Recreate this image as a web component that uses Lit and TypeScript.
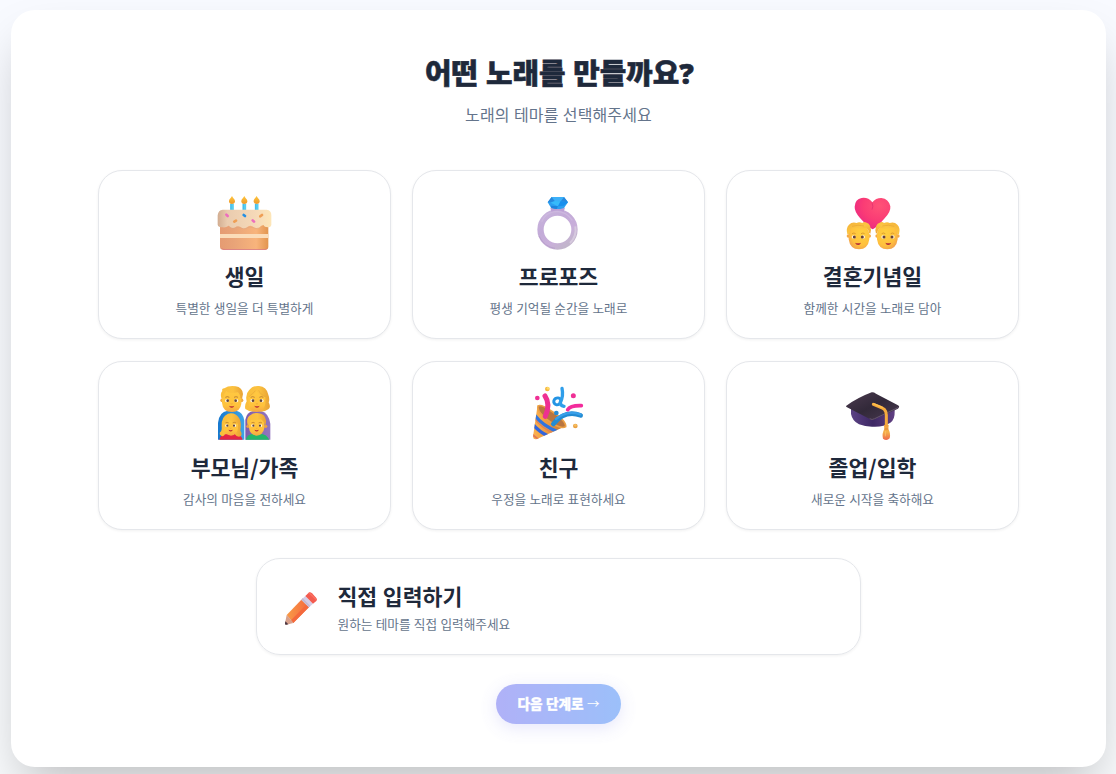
import { LitElement, html, css, svg } from "lit";
import { customElement, property } from "lit/decorators.js";

const cake = svg`
  <defs>
    <linearGradient id="base"><stop offset="0" stop-color="#e59b72"/><stop offset=".3" stop-color="#e9a478"/><stop offset=".75" stop-color="#f8b47c"/><stop offset="1" stop-color="#e2954f"/></linearGradient>
    <linearGradient id="ice"><stop offset="0" stop-color="#d2ad91"/><stop offset=".18" stop-color="#eaccaf"/><stop offset=".7" stop-color="#f5d9b8"/><stop offset="1" stop-color="#fde6b8"/></linearGradient>
    <linearGradient id="flame" x2="0" y2="1"><stop offset="0" stop-color="#ffc83d"/><stop offset="1" stop-color="#ee982c"/></linearGradient>
  </defs>
  <path d="M47 115H192V182Q192 191 183 191H56Q47 191 47 182Z" fill="url(#base)"/>
  <path d="M50 187Q53 191 58 191H183Q188 191 191 186Q187 189 181 189H58Z" fill="#d6747d"/>
  <rect x="47" y="144" width="145" height="12" fill="#fbdcb9"/>
  <path d="M83 53v20M120 53v20M157 53v20" stroke="#58cdf0" stroke-width="11"/>
  <path d="M80 53v18M117 53v18M154 53v18" stroke="#46b9e9" stroke-width="3"/>
  <path d="M83 30C79 37 73 40 74 47C76 56 90 56 92 47C93 40 86 37 83 30ZM120 30C116 37 110 40 111 47C113 56 127 56 129 47C130 40 123 37 120 30ZM157 30C153 37 147 40 148 47C150 56 164 56 166 47C167 40 160 37 157 30Z" fill="url(#flame)"/>
  <path d="M55 71H187Q201 73 201 87V117Q200 124 190 124Q180 124 177 117Q168 119 165 125Q155 130 144 121Q136 116 126 125Q117 131 107 122Q99 118 91 125Q81 129 73 119Q65 125 56 124Q41 124 40 116V88Q42 72 55 71Z" fill="url(#ice)"/>
  <path d="M73 121Q82 131 93 126Q101 121 109 126Q118 131 128 126Q137 120 146 125Q156 130 167 125" fill="none" stroke="#dda480" stroke-width="1.500"/>
  <path d="M66 86l4 4M145 103l4 4" stroke="#ed6fbd" stroke-width="8" stroke-linecap="round"/>
  <path d="M118 87l4 3" stroke="#248fe3" stroke-width="8" stroke-linecap="round"/>
  <path d="M90 107l5-3M168 91l5-4" stroke="#ef9f55" stroke-width="8" stroke-linecap="round"/>`;

const ring = svg`
  <defs>
    <linearGradient id="band" x2=".7" y2="1"><stop offset="0" stop-color="#c8b4dc"/><stop offset=".4" stop-color="#c3abd8"/><stop offset=".75" stop-color="#c9afda"/><stop offset="1" stop-color="#c2b5cc"/></linearGradient>
  </defs>
  <circle cx="112.500" cy="130.500" r="51" fill="none" stroke="url(#band)" stroke-width="19"/>
  <path d="M65 107Q77 78 110 76Q140 77 157 103" fill="none" stroke="#cdb8df" stroke-width="4"/>
  <path d="M166 121Q171 150 150 171" fill="none" stroke="#d6c9de" stroke-width="6"/>
  <path d="M57 150Q73 183 105 187" fill="none" stroke="#b8a0cc" stroke-width="3"/>
  <path d="M91 65H135L131 77Q112 70 94 77Z" fill="#bca0d5"/>
  <path d="M95 33H132L144 49L132 66L121 69H105L93 65L83 49Z" fill="#2c9ff1"/>
  <path d="M95 33L105 45L90 49H83ZM132 33L122 46L138 48L144 49Z" fill="#2788dd"/>
  <path d="M95 33H132L122 46H105Z" fill="#3cb0f8"/>
  <path d="M105 45L121 46L114 61L92 50Z" fill="#37bafa"/>
  <path d="M122 46L144 49L131 59L114 61Z" fill="#198fed"/>
  <path d="M93 59L114 61L110 69L94 66Z" fill="#1e83de"/>`;

const couple = svg`
  <defs>
    <radialGradient id="heart" cx=".7" cy=".25" r=".85"><stop offset="0" stop-color="#ff5277"/><stop offset=".55" stop-color="#fa3c75"/><stop offset="1" stop-color="#e92584"/></radialGradient>
    <radialGradient id="skin" cx=".6" cy=".35" r=".75"><stop offset="0" stop-color="#ffd03f"/><stop offset=".65" stop-color="#ffc13d"/><stop offset="1" stop-color="#ee9a50"/></radialGradient>
    <linearGradient id="hair" x2="1" y2="1"><stop offset="0" stop-color="#f2af38"/><stop offset=".5" stop-color="#fcc642"/><stop offset="1" stop-color="#eba436"/></linearGradient>
    <g id="head">
      <circle cx="44" cy="150" r="5" fill="#f4a947"/><circle cx="107" cy="150" r="5" fill="#f4a947"/>
      <path d="M45 130Q50 115 75 116Q103 117 107 143V160Q103 190 76 190Q49 190 45 160Z" fill="url(#skin)"/>
      <path d="M41 145Q36 126 46 116Q55 107 69 111Q76 107 86 111Q91 106 99 110Q106 111 109 119Q114 130 110 143L106 140Q105 130 97 125Q84 129 68 126Q56 123 50 132L46 144Z" fill="url(#hair)"/>
      <path d="M55 121Q73 115 91 120" fill="none" stroke="#e5a535" stroke-width="2"/>
      <ellipse cx="60" cy="153" rx="6" ry="5" fill="#fff6e2"/><ellipse cx="88" cy="153" rx="6" ry="5" fill="#fff6e2"/>
      <circle cx="62" cy="153" r="4.500" fill="#674036"/><circle cx="86" cy="153" r="4.500" fill="#674036"/>
      <path d="M55 143Q61 139 66 143M82 143Q88 139 93 143" stroke="#cf8b2c" stroke-width="2" fill="none"/>
      <path d="M64 170Q73 174 82 170Q79 178 73 177Q67 177 64 170Z" fill="#b42b38"/>
    </g>
  </defs>
  <path d="M117 130Q107 127 79 96Q62 76 63 62Q64 40 84 36Q103 33 116 49Q126 36 143 36Q165 38 170 61Q172 77 153 97Q127 127 117 130Z" fill="url(#heart)"/>
  <path d="M115 50Q120 61 115 71" stroke="#d92d6d" stroke-width="2" fill="none"/>
  <use href="#head"/><use href="#head" transform="translate(237 0) scale(-1 1)"/>`;

const face = (x: number, y: number, s: number) => svg`
  <g transform="translate(${x} ${y}) scale(${s})">
    <ellipse cx="-14" cy="0" rx="6" ry="5" fill="#fff8e9"/><ellipse cx="14" cy="0" rx="6" ry="5" fill="#fff8e9"/>
    <circle cx="-12" cy="0" r="4" fill="#62433a"/><circle cx="12" cy="0" r="4" fill="#62433a"/>
    <path d="M-19 -10Q-13 -14 -7 -10M7 -10Q13 -14 19 -10" fill="none" stroke="#b3762f" stroke-width="2.500"/>
    <path d="M-3 9Q0 11 3 9" fill="none" stroke="#e99a3c" stroke-width="2"/>
    <path d="M-8 15Q0 18 8 15Q5 22 0 21Q-5 22 -8 15Z" fill="#bd3037"/>
  </g>`;

const family = svg`
  <defs>
    <linearGradient id="fs" x2="0" y2="1"><stop offset="0" stop-color="#ffc841"/><stop offset=".7" stop-color="#ffc23c"/><stop offset="1" stop-color="#f5a646"/></linearGradient>
    <linearGradient id="fh"><stop offset="0" stop-color="#f9bd3a"/><stop offset=".55" stop-color="#fcc240"/><stop offset="1" stop-color="#e8a234"/></linearGradient>
    <linearGradient id="blue"><stop offset="0" stop-color="#1678cf"/><stop offset="1" stop-color="#3da4e6"/></linearGradient>
    <linearGradient id="purple"><stop offset="0" stop-color="#7e5cae"/><stop offset="1" stop-color="#9276bf"/></linearGradient>
  </defs>
  <path d="M41 185V135Q44 101 70 98H96Q117 103 120 128V185Z" fill="url(#blue)"/>
  <path d="M123 185V125Q127 103 146 99H171Q193 105 198 137V185Z" fill="url(#purple)"/>
  <circle cx="54" cy="67" r="6" fill="#f0a842"/><circle cx="111" cy="67" r="6" fill="#f0a842"/>
  <path d="M54 45Q65 36 97 40L111 51V77Q108 101 83 102Q55 101 53 74Z" fill="url(#fs)"/>
  <path d="M51 61Q47 46 54 39Q51 32 60 31Q73 22 94 25Q114 28 116 48L113 63L108 60Q109 49 99 43Q81 48 66 41Q58 46 57 60Z" fill="url(#fh)"/>
  ${face(82, 68, 1)}
  <path d="M123 93Q120 82 127 70Q122 49 134 37Q145 22 164 24Q187 26 192 50Q197 63 193 73Q201 88 192 94Q179 104 160 100Q137 104 123 93Z" fill="url(#fh)"/>
  <path d="M132 58Q147 53 157 39Q165 54 183 58V77Q179 100 158 102Q134 99 132 75Z" fill="url(#fs)"/>
  <path d="M134 56Q146 46 153 38M163 37Q168 50 185 56" fill="none" stroke="#e9aa38" stroke-width="2"/>
  ${face(158, 68, 1)}
  <path d="M45 185Q48 169 65 167H96Q111 170 115 185Z" fill="#e42645"/>
  <path d="M124 185Q128 169 146 167H170Q187 169 195 185Z" fill="#25b66b"/>
  <path d="M52 174Q44 171 47 163Q54 159 52 145Q50 116 71 107Q95 102 106 123Q112 136 108 158Q115 168 109 175Q98 179 91 168L62 169Q59 176 52 174Z" fill="url(#fh)"/>
  <path d="M58 137Q67 132 74 123Q85 136 101 137V150Q99 171 80 173Q59 170 58 150Z" fill="url(#fs)"/>
  ${face(79, 143, .83)}
  <circle cx="131" cy="145" r="5" fill="#eda143"/><circle cx="184" cy="145" r="5" fill="#eda143"/>
  <path d="M134 125Q153 112 180 126V150Q176 172 157 173Q136 170 134 150Z" fill="url(#fs)"/>
  <path d="M130 141Q124 119 139 111Q147 103 164 106Q182 108 185 127Q186 137 182 143Q178 128 169 124Q151 129 140 125Q137 130 136 140Z" fill="url(#fh)"/>
  ${face(157, 143, .83)}`;

const party = svg`
  <defs>
    <linearGradient id="cone"><stop offset="0" stop-color="#fbb250"/><stop offset=".5" stop-color="#ee993d"/><stop offset="1" stop-color="#bb7231"/></linearGradient>
    <clipPath id="coneclip"><path d="M52 87L39 176Q40 186 51 183L133 146Q108 145 84 125Q61 103 52 87Z"/></clipPath>
  </defs>
  <path d="M52 87L39 176Q40 186 51 183L133 146Q108 145 84 125Q61 103 52 87Z" fill="url(#cone)"/>
  <g clip-path="url(#coneclip)" fill="none"><path d="M44 112Q67 143 112 161" stroke="#3174de" stroke-width="10"/><path d="M38 138Q56 161 86 175" stroke="#3165df" stroke-width="10"/><path d="M44 122Q63 150 102 166" stroke="#e28256" stroke-width="4"/><path d="M34 166Q45 178 60 186" stroke="#e27957" stroke-width="5"/></g>
  <path d="M54 84Q64 78 94 99Q139 128 137 146Q124 155 91 132Q50 102 54 84Z" fill="#b97640" stroke="#eda044" stroke-width="5"/>
  <path d="M75 54Q92 78 76 115" fill="none" stroke="#ee3091" stroke-width="15" stroke-linecap="round"/>
  <path d="M100 138Q135 94 182 112" fill="none" stroke="#238bd2" stroke-width="14" stroke-linecap="round"/>
  <path d="M108 123Q140 96 181 109" fill="none" stroke="#379fe9" stroke-width="7" stroke-linecap="round"/>
  <path d="M143 95Q151 82 184 83" fill="none" stroke="#f32b9c" stroke-width="11" stroke-linecap="round"/>
  <ellipse cx="112" cy="70" rx="11" ry="10" transform="rotate(-35 112 70)" fill="none" stroke="#2494e4" stroke-width="9"/>
  <path d="M126 31Q131 55 121 72Q120 83 132 85" fill="none" stroke="#2f9eea" stroke-width="10" stroke-linecap="round" stroke-linejoin="round"/>
  <circle cx="52" cy="60" r="7" fill="#ef3095"/><circle cx="160" cy="53" r="7.500" fill="#ef3095"/>
  <circle cx="82" cy="33" r="7" fill="#f5b63f"/><circle cx="84" cy="31" r="4" fill="#ffdc67"/>
  <circle cx="166" cy="144" r="7" fill="#e9a042"/><circle cx="166" cy="142" r="4" fill="#f6bd5d"/>
  <circle cx="109" cy="105" r="7" fill="#268bd2"/>`;

const cap = svg`
  <defs>
    <linearGradient id="under"><stop offset="0" stop-color="#5b4284"/><stop offset=".5" stop-color="#3d2864"/><stop offset="1" stop-color="#614082"/></linearGradient>
    <linearGradient id="top" x2="1" y2="1"><stop offset="0" stop-color="#4c3b50"/><stop offset=".5" stop-color="#322939"/><stop offset="1" stop-color="#493951"/></linearGradient>
    <linearGradient id="tassel" x2="0" y2="1"><stop offset="0" stop-color="#f4a03d"/><stop offset=".5" stop-color="#f4b04b"/><stop offset="1" stop-color="#ee694d"/></linearGradient>
  </defs>
  <path d="M51 90V108Q55 129 75 139Q95 147 119 146Q149 147 169 134Q183 124 182 101V87L116 120Z" fill="url(#under)"/>
  <path d="M37 83Q73 58 113 43Q119 42 126 47L192 82Q199 86 192 92L121 124Q114 128 106 122L39 88Q34 85 37 83Z" fill="url(#top)"/>
  <path d="M107 122Q114 127 122 122L194 88" stroke="#64546d" stroke-width="3" fill="none"/>
  <path d="M118 79Q143 88 151 94Q157 100 157 111V147" fill="none" stroke="#f6ab3d" stroke-width="9" stroke-linecap="round"/>
  <path d="M119 77L145 88" stroke="#ffc04e" stroke-width="4" stroke-linecap="round"/>
  <path d="M150 141Q157 138 164 141L163 153Q171 166 167 181Q158 190 147 182Q143 167 151 153Z" fill="url(#tassel)"/>
  <path d="M151 153H163" stroke="#d87735" stroke-width="2"/><path d="M155 159l-1 16" stroke="#ffc46d" stroke-width="2"/>`;

const pencil = svg`
  <defs><linearGradient id="wood" x1="0" y1="0" x2="1" y2="0"><stop offset="0" stop-color="#f99a45"/><stop offset="1" stop-color="#f46940"/></linearGradient></defs>
  <path d="M110 195L154 149L177 172L130 219Z" fill="url(#wood)"/>
  <path d="M123 211L168 165L176 172L130 219Z" fill="#f4693d"/>
  <path d="M110 195L105 220Q105 225 109 224L130 219L121 207Z" fill="#d8a18c"/>
  <path d="M106 214L105 221Q105 225 109 224L115 223Z" fill="#493541"/>
  <path d="M154 149L166 138L189 161L177 172Z" fill="#d4cde6"/>
  <path d="M154 149L158 144L181 168L177 172Z" fill="#c4b9d2"/>
  <path d="M166 138L176 128Q181 125 186 130L199 144Q203 149 199 153L189 161Z" fill="#f35b4f"/>
  <path d="M178 129L199 149" stroke="#fc7061" stroke-width="4" stroke-linecap="round"/>`;

const themes = [
  { icon: cake, box: "32 18 180 180", title: "생일", text: "특별한 생일을 더 특별하게" },
  { icon: ring, box: "27 18 180 180", title: "프로포즈", text: "평생 기억될 순간을 노래로" },
  { icon: couple, box: "28 18 180 180", title: "결혼기념일", text: "함께한 시간을 노래로 담아" },
  { icon: family, box: "32 15 180 180", title: "부모님/가족", text: "감사의 마음을 전하세요" },
  { icon: party, box: "27 15 180 180", title: "친구", text: "우정을 노래로 표현하세요" },
  { icon: cap, box: "27 15 180 180", title: "졸업/입학", text: "새로운 시작을 축하해요" },
];

@customElement("theme-card")
class ThemeCard extends LitElement {
  @property({ attribute: false }) theme = themes[0];
  static styles = css`
    :host { display: flex; flex-direction: column; align-items: center; box-sizing: border-box; height: 169px; padding-top: 21px; border: 1px solid #e5e7eb; border-radius: 24px; background: #fff; box-shadow: 0 1px 3px rgba(0,0,0,.06); cursor: pointer; }
    svg { display: block; width: 60px; height: 60px; flex: none; }
    h2 { margin: 9px 0 0; font-family: "Noto Sans CJK KR", sans-serif; font-size: 21.6px; line-height: 30px; font-weight: 700; color: #1e293b; white-space: nowrap; }
    p { margin: 7px 0 0; font-size: 12.65px; line-height: 20px; color: #64748b; white-space: nowrap; }
  `;
  render() {
    return html`<svg viewBox=${this.theme.box} aria-hidden="true">${this.theme.icon}</svg><h2>${this.theme.title}</h2><p>${this.theme.text}</p>`;
  }
}

@customElement("app-root")
class AppRoot extends LitElement {
  static styles = css`
    :host { display: block; box-sizing: border-box; height: 774px; padding: 10px 10px 7px 11px; overflow: hidden; background: linear-gradient(#f8faff, #f8fafc); font-family: "Noto Sans", "Noto Sans CJK KR", sans-serif; }
    .panel { display: flex; flex-direction: column; align-items: center; box-sizing: border-box; height: 757px; padding-top: 42px; border-radius: 24px; background: #fff; box-shadow: 0 25px 50px -12px rgba(0,0,0,.25); }
    h1 { margin: 0; padding-left: 2px; font-size: 28.8px; line-height: 42px; font-weight: 900; word-spacing: .4px; -webkit-text-stroke: .6px #1e293b; color: #1e293b; white-space: nowrap; }
    .lead { margin: 9px 0 0; font-size: 16px; line-height: 24px; letter-spacing: .13px; color: #64748b; white-space: nowrap; }
    .grid { display: grid; grid-template-columns: repeat(3, 293px); column-gap: 21px; row-gap: 22px; margin-top: 43px; }
    .custom { display: flex; align-items: center; box-sizing: border-box; width: 605px; height: 97px; margin-top: 28px; padding-left: 25px; border: 1px solid #e5e7eb; border-radius: 24px; box-shadow: 0 1px 3px rgba(0,0,0,.06); }
    .custom svg { width: 38px; height: 38px; margin-top: 3px; }
    .copy { margin-left: 17.5px; padding-top: 2px; }
    h2 { margin: 0; font-size: 21.6px; line-height: 32px; font-weight: 700; color: #1e293b; }
    .copy p { margin: 1px 0 0; font-size: 12.65px; line-height: 20px; color: #64748b; }
    button { display: flex; align-items: center; justify-content: center; width: 125px; height: 40px; margin: 29px 0 0; padding: 0; border: 0; border-radius: 20px; background: linear-gradient(90deg, #6366f1, #3b82f6); opacity: .5; box-shadow: 0 4px 15px rgba(99,102,241,.3); color: #fff; font: 900 13.6px/20px "Noto Sans", "Noto Sans CJK KR", sans-serif; -webkit-text-stroke: .3px #fff; white-space: pre; }
    .arrow { font-weight: 400; font-size: 12.5px; -webkit-text-stroke: 0; }
  `;
  render() {
    return html`<main class="panel">
      <h1>어떤 노래를 만들까요?</h1>
      <p class="lead">노래의 테마를 선택해주세요</p>
      <section class="grid">${themes.map((theme) => html`<theme-card .theme=${theme}></theme-card>`)}</section>
      <section class="custom">
        <svg viewBox="96 117 114 114" aria-hidden="true">${pencil}</svg>
        <div class="copy"><h2>직접 입력하기</h2><p>원하는 테마를 직접 입력해주세요</p></div>
      </section>
      <button><span>다음 단계로 <span class="arrow">→</span></span></button>
    </main>`;
  }
}
